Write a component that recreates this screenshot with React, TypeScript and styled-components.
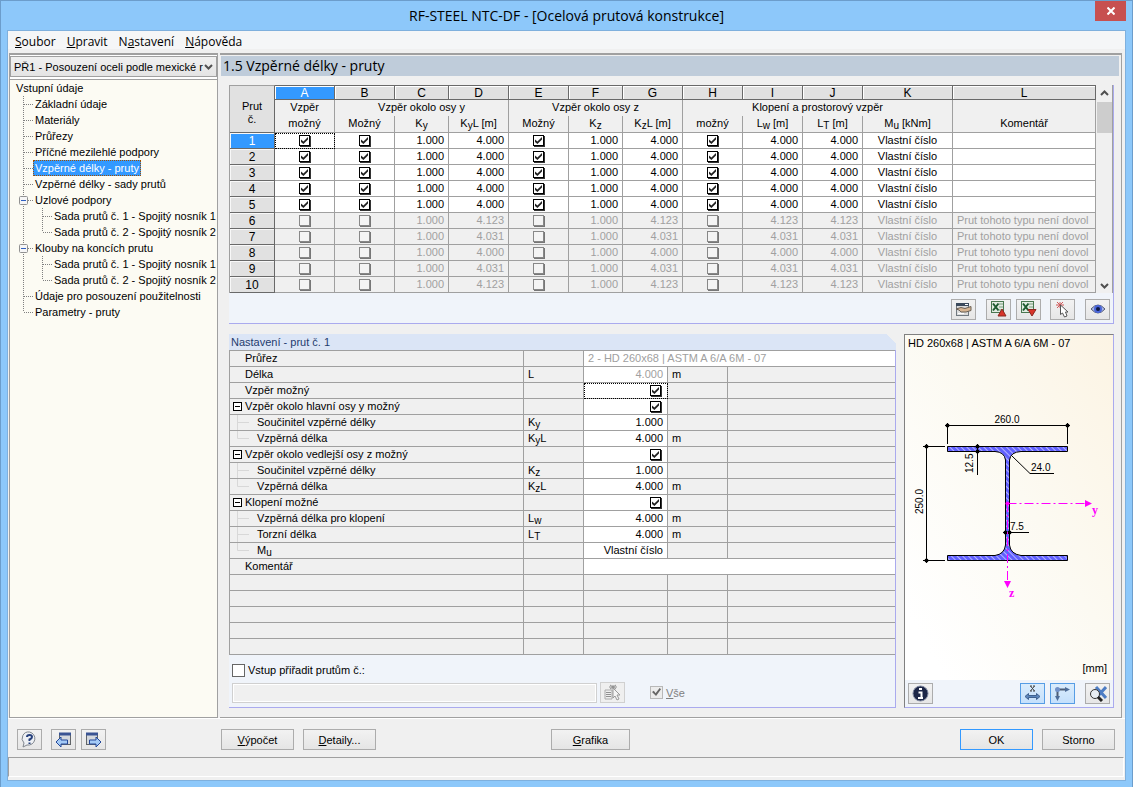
import React from 'react';
import styled, { createGlobalStyle, css } from 'styled-components';

const UI = `'Liberation Sans', Arial, sans-serif`;
const SEGOE = `'Open Sans', 'Noto Sans', sans-serif`;
const LINE = '#a0a0a0';
const FACE = '#f0f0f0';
const LILAC = '#aaaaee';
const BLUE = '#3399ff';

const Global = createGlobalStyle`
  *, *::before, *::after { box-sizing: border-box; }
  html, body, #root { height: 100%; }
  body { margin: 0; font: 11px/16px ${UI}; color: #000; }
  button, input, select { font: inherit; color: inherit; }
  sub { font-size: 10px; line-height: 1px; vertical-align: -2px; }
`;

/* ---------- window frame ---------- */

const Window = styled.div`
  min-height: 100%;
  display: flex;
  flex-direction: column;
  padding: 0 6px 7px;
  background: #8dc8fa;
  border: 1px solid #6c9dcb;
`;

const TitleBar = styled.header`
  display: flex;
  height: 29px;
  align-items: center;
  justify-content: center;
  position: relative;
`;

const Title = styled.h1`
  margin: 0;
  font: 400 14px/20px ${SEGOE};
`;

const CloseButton = styled.button`
  position: absolute;
  top: 0;
  right: 0;
  width: 31px;
  height: 20px;
  padding: 0;
  border: 0;
  background: #c75050;
  display: grid;
  place-items: center;
`;

const Client = styled.div`
  flex: 1;
  display: flex;
  flex-direction: column;
  background: ${FACE};
  border: 1px solid #7fb0dd;
`;

const MenuBar = styled.nav`
  display: flex;
  gap: 11px;
  height: 22px;
  padding: 0 7px;
  align-items: center;
  background: linear-gradient(#f5f6f7 0 18px, ${FACE} 18px);
  font: 12px/20px ${SEGOE};
`;

const MenuButton = styled.button`
  padding: 0;
  border: 0;
  background: none;
`;

const Body = styled.div`
  flex: 1;
  display: flex;
  gap: 2px;
  padding-left: 1px;
  border-bottom: 1px solid #fff;
`;

/* ---------- navigator ---------- */

const Navigator = styled.aside`
  width: 209px;
  flex: none;
  display: flex;
  flex-direction: column;
  gap: 2px;
  border: 1px solid ${LINE};
  border-top-width: 2px;
  background: #fff;
  padding: 1px 0 0;
`;

const CaseBox = styled.div`
  position: relative;
  display: flex;
  height: 21px;
  svg {
    position: absolute;
    right: 4px;
    top: 8px;
    pointer-events: none;
  }
`;

const CaseSelect = styled.select`
  appearance: none;
  width: 100%;
  padding: 0 12px 0 3px;
  border: 1px solid ${LINE};
  background: linear-gradient(#f0f0f0, #e4e4e4);
  border-radius: 0;
`;

const Tree = styled.ul`
  flex: 1;
  margin: 0;
  padding: 0 0 0 5px;
  list-style: none;
  background: #fcfbf3;
  border-top: 1px solid ${LINE};
`;

const TreeRow = styled.li`
  display: flex;
  height: 16px;
  white-space: nowrap;
`;

const TreeLabel = styled.button<{ $selected?: boolean }>`
  padding: 0 1px;
  border: 0;
  background: none;
  line-height: 16px;
  ${(p) =>
    p.$selected &&
    css`
      margin-left: -1px;
      background: ${BLUE};
      color: #fff;
      outline: 1px dotted #a05000;
      outline-offset: -1px;
      padding: 0 2px;
    `}
`;

/* ---------- main panel ---------- */

const Main = styled.main`
  flex: 1;
  min-width: 0;
  display: flex;
  flex-direction: column;
  margin-right: 3px;
  border: solid ${LINE};
  border-width: 2px 1px 1px 0;
  padding: 1px 1px 9px 0;
`;

const Heading = styled.h2`
  margin: 0 1px 0 1px;
  height: 20px;
  padding-left: 2px;
  background: #bfccda;
  font: 400 14px/20px ${SEGOE};
`;

const GridPanel = styled.section`
  margin: 9px 6px 10px 9px;
  border-right: 1px solid ${LILAC};
  border-bottom: 1px solid ${LILAC};
  background: #f0f4fa;
`;

const GridArea = styled.div`
  display: flex;
  background: ${FACE};
`;

const DataTable = styled.table`
  flex: 1;
  min-width: 0;
  table-layout: fixed;
  border-collapse: separate;
  border-spacing: 0;
  border-left: 1px solid ${LINE};
  th {
    font-weight: 400;
  }
`;

const ColumnLetter = styled.th<{ $active?: boolean }>`
  height: 15px;
  padding: 0;
  line-height: 12px;
  font-size: 12px;
  border: solid #696969;
  border-width: 1px 1px 1px 0;
  background: ${(p) => (p.$active ? BLUE : '#e1e1e1')};
  color: ${(p) => (p.$active ? '#fff' : '#000')};
  box-shadow: inset 1px 1px #fff;
`;

const GroupHead = styled.th`
  height: 16px;
  padding: 0;
  line-height: 14px;
  vertical-align: top;
  border-right: 1px solid ${LINE};
`;

const FieldHead = styled.th`
  height: 17px;
  padding: 0;
  line-height: 14px;
  vertical-align: top;
  border-right: 1px solid ${LINE};
  border-bottom: 1px solid ${LINE};
  white-space: nowrap;
`;

const CornerHead = styled.th`
  padding: 8px 0 0;
  background: #e1e1e1;
  border-top: 1px solid ${LINE};
  border-right: 1px solid #696969;
  border-bottom: 1px solid #696969;
  line-height: 13px;
`;

const RowHead = styled.th<{ $active?: boolean }>`
  height: 16px;
  padding: 0;
  font-size: 12px;
  line-height: 14px;
  border: solid #696969;
  border-width: 0 1px 1px 0;
  background: ${(p) => (p.$active ? BLUE : '#e1e1e1')};
  color: ${(p) => (p.$active ? '#fff' : '#000')};
  box-shadow: inset 1px 1px #f8f8f8;
`;

const Cell = styled.td<{ $align?: string; $off?: boolean; $focus?: boolean }>`
  height: 16px;
  padding: 0 4px;
  line-height: 15px;
  text-align: ${(p) => p.$align || 'center'};
  border: solid ${LINE};
  border-width: 0 1px 1px 0;
  background: ${(p) => (p.$off ? FACE : '#fff')};
  color: ${(p) => (p.$off ? '#a0a0a0' : '#000')};
  white-space: nowrap;
  overflow: hidden;
  ${(p) =>
    p.$focus &&
    css`
      outline: 1px dotted #000;
      outline-offset: -1px;
    `}
`;

const GridCheck = styled.input`
  appearance: none;
  display: block;
  width: 11px;
  height: 11px;
  margin: 0 auto;
  border: 1px solid #000;
  background: #fff;
  box-shadow: 1px 1px #333;
  &:checked::before {
    content: '';
    display: block;
    width: 7px;
    height: 7px;
    margin: 1px;
    background: #222;
    clip-path: polygon(0 35%, 35% 65%, 100% 0, 100% 35%, 35% 100%, 0 70%);
  }
  &:disabled {
    border-color: #888;
    background: #f4f4f4;
    box-shadow: 1px 1px #777;
  }
`;

const ScrollBar = styled.div`
  width: 17px;
  display: flex;
  flex-direction: column;
  align-items: center;
  padding: 5px 0 4px;
  border-right: 1px solid ${LINE};
  justify-content: space-between;
`;

const ScrollTop = styled.div`
  display: flex;
  flex-direction: column;
  align-items: center;
  gap: 6px;
`;

const Thumb = styled.div`
  width: 15px;
  height: 31px;
  background: #cdcdcd;
`;

const ToolRow = styled.div`
  display: flex;
  height: 30px;
  align-items: center;
  padding: 2px 3px 0 5px;
  justify-content: flex-end;
`;

const IconButton = styled.button<{ $on?: boolean; $gap?: number }>`
  width: 25px;
  height: 21px;
  flex: none;
  margin-left: ${(p) => p.$gap || 0}px;
  padding: 0;
  display: grid;
  place-items: center;
  border: 1px solid ${(p) => (p.$on ? '#569de5' : '#acacac')};
  background: ${(p) => (p.$on ? 'linear-gradient(#daecfc, #c4e0fc)' : 'linear-gradient(#f2f2f2, #e6e6e6)')};
  &:disabled {
    border-color: #d0d0d0;
    background: #efefef;
  }
`;

/* ---------- lower row ---------- */

const Lower = styled.div`
  flex: 1;
  display: flex;
  gap: 8px;
  margin: 0 6px 0 9px;
`;

const Details = styled.section`
  flex: 1;
  min-width: 0;
  display: flex;
  flex-direction: column;
  background: #f0f4fa;
  border-bottom: 1px solid ${LILAC};
  border-right: 1px solid ${LILAC};
`;

const DetailsTitle = styled.h3`
  margin: 0 -1px 0 0;
  height: 16px;
  padding-left: 2px;
  font: 400 11px/17px ${UI};
  color: #1f3c6e;
  background: linear-gradient(225deg, ${FACE} 7px, #dbe5f6 7px);
`;

const DetailTable = styled.table`
  width: 100%;
  table-layout: fixed;
  border-collapse: separate;
  border-spacing: 0;
  border-top: 1px solid ${LINE};
  border-left: 1px solid ${LINE};
  background: ${FACE};
`;

const DCell = styled.td<{ $white?: boolean; $grey?: boolean; $right?: boolean; $last?: boolean; $focus?: boolean }>`
  height: 16px;
  padding: 0 4px;
  line-height: 15px;
  border: solid ${LINE};
  border-width: 0 ${(p) => (p.$last ? 0 : 1)}px 1px 0;
  text-align: ${(p) => (p.$right ? 'right' : 'left')};
  background: ${(p) => (p.$white ? '#fff' : FACE)};
  color: ${(p) => (p.$grey ? '#a0a0a0' : '#000')};
  white-space: nowrap;
  ${(p) =>
    p.$focus &&
    css`
      outline: 1px dotted #000;
      outline-offset: -1px;
    `}
  ${GridCheck} {
    margin: 0 2px 0 auto;
  }
`;

const NameCell = styled.th`
  height: 16px;
  padding: 0;
  border: solid ${LINE};
  border-width: 0 1px 1px 0;
  font-weight: 400;
  text-align: left;
  line-height: 15px;
`;

const NameInner = styled.span<{ $level: number }>`
  display: flex;
  height: 15px;
  align-items: center;
  padding-left: ${(p) => (p.$level ? 7 : 3)}px;
  svg {
    flex: none;
    margin-right: ${(p) => (p.$level ? 8 : 3)}px;
  }
`;

const Blank = styled.span`
  width: 12px;
`;

const Assign = styled.div`
  flex: 1;
  padding: 8px 3px 4px;
  display: flex;
  flex-direction: column;
  gap: 5px;
`;

const CheckLabel = styled.label<{ $grey?: boolean }>`
  display: flex;
  align-items: center;
  gap: 3px;
  height: 14px;
  color: ${(p) => (p.$grey ? '#808080' : '#000')};
`;

const PlainCheck = styled.input`
  appearance: none;
  width: 13px;
  height: 13px;
  margin: 0;
  border: 1px solid #666;
  background: #fff;
  &:disabled {
    border-color: #b8b8b8;
    background: #ececec;
  }
  &:checked::before {
    content: '';
    display: block;
    width: 9px;
    height: 8px;
    margin: 1px;
    background: #666;
    clip-path: polygon(0 50%, 20% 35%, 40% 65%, 85% 0, 100% 15%, 45% 100%);
  }
`;

const AssignLine = styled.div`
  display: flex;
  align-items: center;
  gap: 3px;
  ${CheckLabel} {
    margin-left: 22px;
  }
`;

const MemberInput = styled.input`
  flex: 0 1 365px;
  min-width: 0;
  height: 20px;
  border: 1px solid #d0d0d0;
  background: ${FACE};
  box-shadow: inset 0 0 0 1px #fff;
`;

const SectionPanel = styled.section`
  width: 210px;
  flex: none;
  display: flex;
  flex-direction: column;
  border: 1px solid #808080;
  border-right-color: ${LILAC};
  border-bottom-color: ${LILAC};
  background: #f0f4fa;
`;

const Drawing = styled.div`
  flex: 1;
  display: flex;
  flex-direction: column;
  background: linear-gradient(60deg, #fff 10%, #fcfaf2 55%, #fcf4e4);
`;

const Caption = styled.div<{ $right?: boolean }>`
  padding: 0 6px ${(p) => (p.$right ? 4 : 2)}px 3px;
  text-align: ${(p) => (p.$right ? 'right' : 'left')};
`;

const SectionTools = styled.div`
  display: flex;
  height: 27px;
  padding: 3px 3px 0;
`;

const Push = styled.span<{ $grow?: number }>`
  flex: ${(p) => p.$grow || 1} 1 0;
`;

/* ---------- bottom bars ---------- */

const Footer = styled.footer`
  display: flex;
  align-items: center;
  height: 38px;
  padding: 3px 10px 0 9px;
`;

const FooterIcons = styled.div`
  display: flex;
  width: 204px;
  flex: none;
`;

const PushButton = styled.button<{ $wide?: boolean; $default?: boolean }>`
  width: ${(p) => (p.$wide ? 79 : 73)}px;
  height: 21px;
  padding: 0;
  border: 1px solid ${(p) => (p.$default ? BLUE : '#acacac')};
  background: linear-gradient(#f2f2f2, #e5e5e5);
  & + & {
    margin-left: 9px;
  }
`;

const StatusBar = styled.div`
  height: 20px;
  margin: 0 1px 3px 0;
  border: solid #fff;
  border-width: 1px;
  border-top-color: ${LINE};
  border-left-color: ${LINE};
`;

/* ---------- drawings ---------- */

const Chevron = ({ up }: { up?: boolean }) => (
  <svg width="9" height="6" viewBox="0 0 9 6" aria-hidden>
    <path d={up ? 'M1 5 4.5 1.5 8 5' : 'M1 1 4.5 4.5 8 1'} fill="none" stroke="#505050" strokeWidth="2" />
  </svg>
);

const dot = { stroke: '#808080', strokeDasharray: '1 1', fill: 'none' } as const;

const Guide = ({ kind }: { kind: 'line' | 'tee' | 'end' | 'box' }) => (
  <svg width="19" height="16" aria-hidden>
    <path d={kind === 'end' ? 'M8.5 0V8' : 'M8.5 0V16'} {...dot} />
    {kind !== 'line' && <path d="M9 8.5H18" {...dot} />}
    {kind === 'box' && (
      <>
        <rect x="4.5" y="4.5" width="8" height="8" rx="1" fill="#f6f6f6" stroke="#919191" />
        <path d="M6 8.5H11" stroke="#3060c0" />
      </>
    )}
  </svg>
);

const MinusBox = () => (
  <svg width="9" height="9" aria-hidden>
    <rect x="0.5" y="0.5" width="8" height="8" fill="#fff" stroke="#000" />
    <path d="M2 4.5H7" stroke="#000" />
  </svg>
);

const Branch = ({ last }: { last?: boolean }) => (
  <svg width="12" height="15" aria-hidden>
    <path d={last ? 'M0.5 0V7.5H12' : 'M0.5 0V15M0 7.5H12'} fill="none" stroke="#d8d8d8" />
  </svg>
);

const FormIcon = () => (
  <svg width="17" height="15" aria-hidden>
    <rect x="1.5" y="1.5" width="12" height="12" fill="#dcdcdc" stroke="#70787f" />
    <path d="M1 2.5H14" stroke="#3c4a5c" strokeWidth="3" />
    <path d="M10 2.5H13" stroke="#fff" />
    <path d="M3 11.5H9" stroke="#fff" />
    <path d="M1 7 6 5.500 10 6.500 16 4.500V8.500L11 10H6L4 8Z" fill="#d8b592" stroke="#6b6055" />
  </svg>
);

const ExcelIcon = ({ down }: { down?: boolean }) => (
  <svg width="17" height="16" aria-hidden>
    <rect x="1.5" y="0.5" width="12" height="11" fill="#e3ece2" stroke="#4a7750" />
    <path d="M9 3H13M9 6H13M9 9H13" stroke="#789b7c" />
    <path d="M3 2.500 8.500 9.500M8.500 2.500 3 9.500" stroke="#1e5b30" strokeWidth="2" />
    <path d={down ? 'M8 8.500H16L12 15Z' : 'M8 15H16L12 8Z'} fill="#d8342a" stroke="#8b2820" />
  </svg>
);

const PickIcon = () => (
  <svg width="16" height="17" aria-hidden>
    <path d="M1 4H9M5 1V7M2 1 8 7M8 1 2 7" stroke="#d05858" />
    <path d="M5.500 4V13.500L7.500 12 9.500 16 12 15 10.500 11H13Z" fill="#fff" stroke="#555" />
  </svg>
);

const EyeIcon = () => (
  <svg width="16" height="12" aria-hidden>
    <path d="M1 6Q8 -2 15 6Q8 14 1 6Z" fill="#aab6ea" stroke="#555c72" />
    <circle cx="8" cy="6" r="4" fill="#4a66d8" />
    <circle cx="8" cy="6" r="2" fill="#101a44" />
  </svg>
);

const PickListIcon = () => (
  <svg width="17" height="17" aria-hidden>
    <path d="M1 6H8V15H1Z" fill="#eee" stroke="#aaa" />
    <path d="M2 8.500H7M2 10.500H7M2 12.500H7" stroke="#909090" />
    <path d="M5 3H13M9 1V5M6 1 12 5M12 1 6 5" stroke="#909090" />
    <path d="M9 4V14L11 12 13 16 15 15 13 11H16Z" fill="#f4f4f4" stroke="#999" />
  </svg>
);

const InfoIcon = () => (
  <svg width="17" height="17" aria-hidden>
    <circle cx="8.500" cy="8.500" r="7.500" fill="#1d2748" stroke="#7f88a0" />
    <path d="M7 4H10M6.500 7.500H9.500V13M6 13H11" fill="none" stroke="#fff" strokeWidth="2" />
  </svg>
);

const DimXIcon = () => (
  <svg width="17" height="17" aria-hidden>
    <path d="M6.500 1 10.500 6M10.500 1 6.500 6M6 1H8M9 1H11M6 6H8M9 6H11" stroke="#444" />
    <path d="M1 11.500 4.500 8.500V10.500H12.500V8.500L16 11.500 12.500 14.500V12.500H4.500V14.500Z" fill="#5b86bd" stroke="#3f618f" />
  </svg>
);

const AxesIcon = () => (
  <svg width="17" height="16" aria-hidden>
    <path d="M3.500 4V12M4 3.500H13" stroke="#4d5d75" strokeWidth="2" />
    <path d="M1 10 3.500 15 6 10ZM11 1 16 3.500 11 6Z" fill="#4d6c98" />
    <circle cx="3.500" cy="3.500" r="2.500" fill="#7090c8" />
  </svg>
);

const ZoomIcon = () => (
  <svg width="18" height="16" aria-hidden>
    <path d="M7 1 17 12M17 1 8 11" stroke="#4c7cc4" strokeWidth="3" />
    <circle cx="6" cy="8" r="4.500" fill="#e8eef4" stroke="#333" />
    <path d="M9 11 13 15" stroke="#222" strokeWidth="3" />
  </svg>
);

const HelpIcon = () => (
  <svg width="17" height="17" aria-hidden>
    <path d="M8.500 1A6.500 6.500 0 1 1 6 14L2 16 3 12A6.500 6.500 0 0 1 8.500 1Z" fill="#edf0f4" stroke="#80868e" />
    <path d="M6 6Q6 4 8.500 4T11 6Q11 7.500 8.500 8.500V10M8.500 11.500V13" fill="none" stroke="#27407c" strokeWidth="2" />
  </svg>
);

const PageIcon = ({ next }: { next?: boolean }) => (
  <svg width="17" height="16" aria-hidden>
    <g transform={next ? 'translate(17 0) scale(-1 1)' : undefined}>
      <rect x="4.500" y="1.500" width="11" height="11" fill="#d4d8de" stroke="#606468" />
      <path d="M4 2H16" stroke="#3a5494" strokeWidth="3" />
      <path d="M1 10 6 5V8H12.500V12H6V15Z" fill="#a4caf6" stroke="#24489a" />
    </g>
  </svg>
);

const Dots = ({ at }: { at: [number, number][] }) => (
  <>
    {at.map(([x, y]) => (
      <circle key={`${x}-${y}`} cx={x} cy={y} r="2" fill="#000" />
    ))}
  </>
);

const SectionSvg = () => (
  <svg width="208" height="300" viewBox="0 18 208 300" fontFamily={UI} fontSize="10" role="img" aria-label="HD 260x68">
    <defs>
      <pattern id="hatch" width="4" height="4" patternUnits="userSpaceOnUse" patternTransform="rotate(-45)">
        <rect width="4" height="4" fill="#6060ff" />
        <path d="M0.500 0V4" stroke="#b4b4ff" />
      </pattern>
    </defs>
    <path
      d="M42.500 111.500H162.500V116.500H116Q105.500 117 104.500 125V210Q105.500 219 116 220.500H162.500V225.500H42.500V220.500H90Q99.500 219 100.500 210V125Q99.500 117 90 116.500H42.500Z"
      fill="url(#hatch)"
      stroke="#000"
    />
    <g stroke="#000" fill="none">
      <path d="M40 90.500H165M42.500 88V109M162.500 88V109" />
      <path d="M21.500 109V228M18 111.500H40M18 225.500H40" />
      <path d="M72.500 109V140" />
      <path d="M107 121 125 138.500H149" />
      <path d="M98 197.500H124" />
    </g>
    <Dots at={[[42.5, 90.5], [162.5, 90.5], [21.5, 111.5], [21.5, 225.5], [72.5, 111.5], [72.5, 116.5], [100.5, 197.5], [104.5, 197.5]]} />
    <g stroke="#ff00ff" strokeDasharray="9 3 2 3">
      <path d="M102.500 168.500H184" />
      <path d="M102.500 168V246" />
    </g>
    <g fill="#ff00ff" fontFamily="'Liberation Serif', serif" fontSize="12" fontWeight="700">
      <circle cx="102.500" cy="168.500" r="2" />
      <path d="M180 165V172L187 168.500ZM99 246H106L102.500 253Z" />
      <text x="187" y="179">y</text>
      <text x="104" y="262">z</text>
    </g>
    <text x="102" y="88" textAnchor="middle">260.0</text>
    <text x="126" y="136">24.0</text>
    <text x="105" y="195">7.5</text>
    <text transform="translate(68 138) rotate(-90)">12.5</text>
    <text transform="translate(18 179) rotate(-90)">250.0</text>
  </svg>
);

/* ---------- data ---------- */

type G = 'line' | 'tee' | 'end' | 'box';
const tree: { guides: G[]; label: string; selected?: boolean }[] = [
  { guides: [], label: 'Vstupní údaje' },
  { guides: ['tee'], label: 'Základní údaje' },
  { guides: ['tee'], label: 'Materiály' },
  { guides: ['tee'], label: 'Průřezy' },
  { guides: ['tee'], label: 'Příčné mezilehlé podpory' },
  { guides: ['tee'], label: 'Vzpěrné délky - pruty', selected: true },
  { guides: ['tee'], label: 'Vzpěrné délky - sady prutů' },
  { guides: ['box'], label: 'Uzlové podpory' },
  { guides: ['line', 'tee'], label: 'Sada prutů č. 1 - Spojitý nosník 1' },
  { guides: ['line', 'end'], label: 'Sada prutů č. 2 - Spojitý nosník 2' },
  { guides: ['box'], label: 'Klouby na koncích prutu' },
  { guides: ['line', 'tee'], label: 'Sada prutů č. 1 - Spojitý nosník 1' },
  { guides: ['line', 'end'], label: 'Sada prutů č. 2 - Spojitý nosník 2' },
  { guides: ['tee'], label: 'Údaje pro posouzení použitelnosti' },
  { guides: ['end'], label: 'Parametry - pruty' },
];

const lengths = ['4.000', '4.000', '4.000', '4.000', '4.000', '4.123', '4.031', '4.000', '4.031', '4.123'];
const colWidths = [45, 60, 60, 54, 60, 60, 54, 60, 60, 60, 60, 90];

type Detail = {
  name?: React.ReactNode;
  level?: number;
  group?: boolean;
  last?: boolean;
  symbol?: React.ReactNode;
  value?: string;
  check?: boolean;
  unit?: string;
  wide?: boolean;
  grey?: boolean;
  focus?: boolean;
};

const Ky = <>K<sub>y</sub></>;
const Kz = <>K<sub>z</sub></>;
const details: Detail[] = [
  { name: 'Průřez', value: '2 - HD 260x68 | ASTM A 6/A 6M - 07', wide: true, grey: true },
  { name: 'Délka', symbol: 'L', value: '4.000', unit: 'm', grey: true },
  { name: 'Vzpěr možný', check: true, focus: true },
  { name: 'Vzpěr okolo hlavní osy y možný', group: true, check: true },
  { name: 'Součinitel vzpěrné délky', level: 1, symbol: Ky, value: '1.000' },
  { name: 'Vzpěrná délka', level: 1, last: true, symbol: <>{Ky}L</>, value: '4.000', unit: 'm' },
  { name: 'Vzpěr okolo vedlejší osy z možný', group: true, check: true },
  { name: 'Součinitel vzpěrné délky', level: 1, symbol: Kz, value: '1.000' },
  { name: 'Vzpěrná délka', level: 1, last: true, symbol: <>{Kz}L</>, value: '4.000', unit: 'm' },
  { name: 'Klopení možné', group: true, check: true },
  { name: 'Vzpěrná délka pro klopení', level: 1, symbol: <>L<sub>w</sub></>, value: '4.000', unit: 'm' },
  { name: 'Torzní délka', level: 1, symbol: <>L<sub>T</sub></>, value: '4.000', unit: 'm' },
  { name: <span>M<sub>u</sub></span>, level: 1, last: true, value: 'Vlastní číslo' },
  { name: 'Komentář', value: '', wide: true },
  {}, {}, {}, {}, {},
];

const DetailRow = ({ d }: { d: Detail }) => (
  <tr>
    <NameCell scope="row">
      {d.name && (
        <NameInner $level={d.level || 0}>
          {d.level ? <Branch last={d.last} /> : d.group ? <MinusBox /> : <Blank />}
          {d.name}
        </NameInner>
      )}
    </NameCell>
    <DCell>{d.symbol}</DCell>
    {d.wide ? (
      <DCell $white $grey={d.grey} $last colSpan={3}>{d.value}</DCell>
    ) : (
      <>
        <DCell $white={!!(d.value || d.check)} $grey={d.grey} $right $focus={d.focus}>
          {d.check ? <GridCheck type="checkbox" defaultChecked aria-label={String(d.name)} /> : d.value}
        </DCell>
        <DCell>{d.unit}</DCell>
        <DCell $last />
      </>
    )}
  </tr>
);

export default function App() {
  return (
    <>
      <Global />
      <Window>
        <TitleBar>
          <Title>RF-STEEL NTC-DF - [Ocelová prutová konstrukce]</Title>
          <CloseButton aria-label="Zavřít">
            <svg width="8" height="8" aria-hidden>
              <path d="M0.500 0.500 7.500 7.500M7.500 0.500 0.500 7.500" stroke="#fff" strokeWidth="2" />
            </svg>
          </CloseButton>
        </TitleBar>
        <Client>
          <MenuBar>
            <MenuButton><u>S</u>oubor</MenuButton>
            <MenuButton><u>U</u>pravit</MenuButton>
            <MenuButton>N<u>a</u>stavení</MenuButton>
            <MenuButton><u>N</u>ápověda</MenuButton>
          </MenuBar>
          <Body>
            <Navigator>
              <CaseBox>
                <CaseSelect aria-label="Případ">
                  <option>PŘ1 - Posouzení oceli podle mexické r</option>
                </CaseSelect>
                <Chevron />
              </CaseBox>
              <Tree>
                {tree.map((t, i) => (
                  <TreeRow key={i}>
                    {t.guides.map((g, j) => <Guide key={j} kind={g} />)}
                    <TreeLabel $selected={t.selected}>{t.label}</TreeLabel>
                  </TreeRow>
                ))}
              </Tree>
            </Navigator>
            <Main>
              <Heading>1.5 Vzpěrné délky - pruty</Heading>
              <GridPanel>
                <GridArea>
                  <DataTable>
                    <colgroup>
                      {colWidths.map((w, i) => <col key={i} width={w} />)}
                      <col />
                    </colgroup>
                    <thead>
                      <tr>
                        <CornerHead rowSpan={3}>Prut<br />č.</CornerHead>
                        {'ABCDEFGHIJKL'.split('').map((c) => (
                          <ColumnLetter key={c} $active={c === 'A'}>{c}</ColumnLetter>
                        ))}
                      </tr>
                      <tr>
                        <GroupHead>Vzpěr</GroupHead>
                        <GroupHead colSpan={3}>Vzpěr okolo osy y</GroupHead>
                        <GroupHead colSpan={3}>Vzpěr okolo osy z</GroupHead>
                        <GroupHead colSpan={4}>Klopení a prostorový vzpěr</GroupHead>
                        <GroupHead />
                      </tr>
                      <tr>
                        <FieldHead>možný</FieldHead>
                        <FieldHead>Možný</FieldHead>
                        <FieldHead>{Ky}</FieldHead>
                        <FieldHead>{Ky}L [m]</FieldHead>
                        <FieldHead>Možný</FieldHead>
                        <FieldHead>{Kz}</FieldHead>
                        <FieldHead>{Kz}L [m]</FieldHead>
                        <FieldHead>možný</FieldHead>
                        <FieldHead>L<sub>w</sub> [m]</FieldHead>
                        <FieldHead>L<sub>T</sub> [m]</FieldHead>
                        <FieldHead>M<sub>u</sub> [kNm]</FieldHead>
                        <FieldHead>Komentář</FieldHead>
                      </tr>
                    </thead>
                    <tbody>
                      {lengths.map((len, i) => {
                        const off = i > 4;
                        const check = (name: string) => (
                          <GridCheck type="checkbox" defaultChecked={!off} disabled={off} aria-label={`${name} ${i + 1}`} />
                        );
                        return (
                          <tr key={i}>
                            <RowHead scope="row" $active={i === 0}>{i + 1}</RowHead>
                            <Cell $off={off} $focus={i === 0}>{check('Vzpěr možný')}</Cell>
                            <Cell $off={off}>{check('Vzpěr okolo osy y')}</Cell>
                            <Cell $off={off} $align="right">1.000</Cell>
                            <Cell $off={off} $align="right">{len}</Cell>
                            <Cell $off={off}>{check('Vzpěr okolo osy z')}</Cell>
                            <Cell $off={off} $align="right">1.000</Cell>
                            <Cell $off={off} $align="right">{len}</Cell>
                            <Cell $off={off}>{check('Klopení')}</Cell>
                            <Cell $off={off} $align="right">{len}</Cell>
                            <Cell $off={off} $align="right">{len}</Cell>
                            <Cell $off={off}>Vlastní číslo</Cell>
                            <Cell $off={off} $align="left">{off ? 'Prut tohoto typu není dovol' : ''}</Cell>
                          </tr>
                        );
                      })}
                    </tbody>
                  </DataTable>
                  <ScrollBar>
                    <ScrollTop>
                      <Chevron up />
                      <Thumb />
                    </ScrollTop>
                    <Chevron />
                  </ScrollBar>
                </GridArea>
                <ToolRow>
                  <IconButton aria-label="Upravit"><FormIcon /></IconButton>
                  <IconButton aria-label="Export" $gap={10}><ExcelIcon /></IconButton>
                  <IconButton aria-label="Import" $gap={5}><ExcelIcon down /></IconButton>
                  <IconButton aria-label="Vybrat" $gap={9}><PickIcon /></IconButton>
                  <IconButton aria-label="Zobrazit" $gap={10}><EyeIcon /></IconButton>
                </ToolRow>
              </GridPanel>
              <Lower>
                <Details>
                  <DetailsTitle>Nastavení - prut č. 1</DetailsTitle>
                  <DetailTable>
                    <colgroup>
                      <col width={294} />
                      <col width={60} />
                      <col width={84} />
                      <col width={60} />
                      <col />
                    </colgroup>
                    <tbody>
                      {details.map((d, i) => <DetailRow key={i} d={d} />)}
                    </tbody>
                  </DetailTable>
                  <Assign>
                    <CheckLabel>
                      <PlainCheck type="checkbox" />
                      Vstup přiřadit prutům č.:
                    </CheckLabel>
                    <AssignLine>
                      <MemberInput disabled aria-label="Čísla prutů" />
                      <IconButton disabled aria-label="Vybrat pruty"><PickListIcon /></IconButton>
                      <CheckLabel $grey>
                        <PlainCheck type="checkbox" defaultChecked disabled />
                        <span><u>V</u>še</span>
                      </CheckLabel>
                    </AssignLine>
                  </Assign>
                </Details>
                <SectionPanel>
                  <Drawing>
                    <Caption>HD 260x68 | ASTM A 6/A 6M - 07</Caption>
                    <SectionSvg />
                    <Push />
                    <Caption $right>[mm]</Caption>
                  </Drawing>
                  <SectionTools>
                    <IconButton aria-label="Informace"><InfoIcon /></IconButton>
                    <Push />
                    <IconButton $on aria-label="Kóty"><DimXIcon /></IconButton>
                    <IconButton $on $gap={5} aria-label="Osy"><AxesIcon /></IconButton>
                    <IconButton $gap={10} aria-label="Celý průřez"><ZoomIcon /></IconButton>
                  </SectionTools>
                </SectionPanel>
              </Lower>
            </Main>
          </Body>
          <Footer>
            <FooterIcons>
              <IconButton aria-label="Nápověda"><HelpIcon /></IconButton>
              <IconButton $gap={9} aria-label="Předchozí"><PageIcon /></IconButton>
              <IconButton $gap={5} aria-label="Další"><PageIcon next /></IconButton>
            </FooterIcons>
            <PushButton><u>V</u>ýpočet</PushButton>
            <PushButton><u>D</u>etaily...</PushButton>
            <Push $grow={175} />
            <PushButton $wide><u>G</u>rafika</PushButton>
            <Push $grow={330} />
            <PushButton $default>OK</PushButton>
            <PushButton>Storno</PushButton>
          </Footer>
          <StatusBar />
        </Client>
      </Window>
    </>
  );
}
